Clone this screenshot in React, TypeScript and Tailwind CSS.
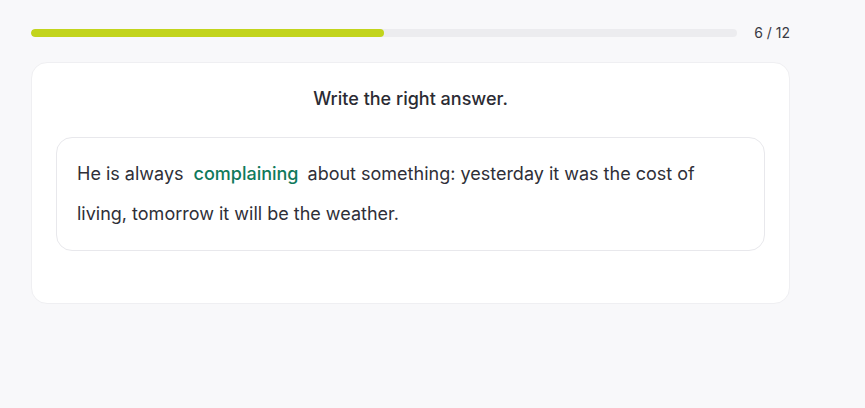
import React from "react";

const progress = 6;
const total = 12;

export default function App() {
  return (
    <div
      className="min-h-screen bg-[#f8f8fa] text-[#2b2b33]"
      style={{ fontFamily: "Inter, 'Noto Sans', sans-serif" }}
    >
      <div className="w-[759px] ml-[31px] pt-[26px]">
        {/* Progress */}
        <div className="flex items-center gap-[17px]">
          <div className="flex-1 h-[8px] rounded-full bg-[#ececef] overflow-hidden">
            <div
              className="h-full rounded-full bg-[#c2d41c]"
              style={{ width: `${(progress / total) * 100}%` }}
            />
          </div>
          <span className="text-[14px] leading-none text-[#3a3a44]">
            {progress} / {total}
          </span>
        </div>

        {/* Card */}
        <div className="mt-[22px] bg-white border border-[#efeff2] rounded-[16px] px-[24px] pt-[24px] pb-[52px]">
          <h2 className="text-center text-[18px] font-medium leading-[24px]">
            Write the right answer.
          </h2>
          <div className="mt-[26px] border border-[#e8e8ec] rounded-[16px] px-[20px] py-[16px]">
            <p className="text-[18px] leading-[40px] text-[#2f2f38]">
              He is always
              <span className="inline-block ml-[10px] mr-[9px] font-medium text-[#107a5c]">
                complaining
              </span>
              about something: yesterday it was the cost of living, tomorrow it will be the
              weather.
            </p>
          </div>
        </div>
      </div>
    </div>
  );
}
